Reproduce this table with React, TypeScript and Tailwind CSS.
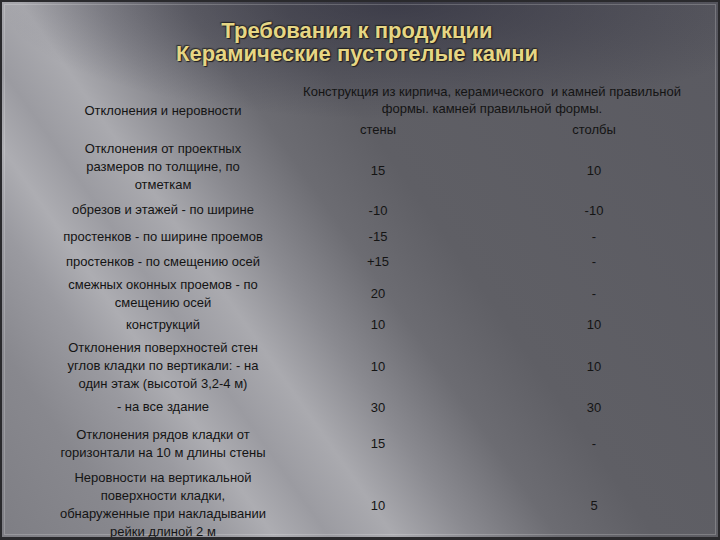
import React from 'react'

type Row = { label: string[]; walls: string; pillars: string; shift?: boolean }

const rows: Row[] = [
  { label: ['Отклонения от проектных', 'размеров по толщине, по', 'отметкам'], walls: '15', pillars: '10', shift: true },
  { label: ['обрезов и этажей - по ширине'], walls: '-10', pillars: '-10' },
  { label: ['простенков - по ширине проемов'], walls: '-15', pillars: '-' },
  { label: ['простенков - по смещению осей'], walls: '+15', pillars: '-' },
  { label: ['смежных оконных проемов - по', 'смещению осей'], walls: '20', pillars: '-' },
  { label: ['конструкций'], walls: '10', pillars: '10' },
  { label: ['Отклонения поверхностей стен', 'углов кладки по вертикали: - на', 'один этаж (высотой 3,2-4 м)'], walls: '10', pillars: '10' },
  { label: ['- на все здание'], walls: '30', pillars: '30' },
  { label: ['Отклонения рядов кладки от', 'горизонтали на 10 м длины стены'], walls: '15', pillars: '-' },
  { label: ['Неровности на вертикальной', 'поверхности кладки,', 'обнаруженные при накладывании', 'рейки длиной 2 м'], walls: '10', pillars: '5' },
]

function Cell({ children }: { children: React.ReactNode }) {
  return <div className="flex flex-col items-center justify-center text-center">{children}</div>
}

export default function App() {
  return (
    <div className="w-[720px] h-[540px] overflow-hidden border-2 border-b-[3px] border-[#2a2a2d] p-[2px] font-['Liberation_Sans',Arial,sans-serif] bg-[radial-gradient(ellipse_55%_22%_at_55%_0%,rgba(28,28,46,0.5)_0%,rgba(28,28,46,0)_100%),linear-gradient(55deg,#7e7e84_0%,#88888e_12%,#9a9aa0_20%,#adadb2_25%,#9b9ba1_30%,#aaaaaf_36%,#8a8a90_43%,#6c6c72_51%,#5f5f65_60%,#5a5a61_100%)]">
      <div className="h-full border border-white/20">
        {/* title */}
        <div className="pt-[14px] pr-[6px] text-center text-[22px] leading-[23px] font-bold text-[#e6d684] [text-shadow:1px_1px_1px_#1e1e1e,-1px_-1px_1px_rgba(30,30,30,0.7),1px_-1px_1px_rgba(30,30,30,0.5)]">
          <div>Требования к продукции</div>
          <div>Керамические пустотелые камни</div>
        </div>

        {/* table */}
        <div className="mt-[15px] ml-[45px] grid grid-cols-[226px_204px_228px] grid-rows-[40px_20px_54px_32px_21px_29px_35px_27px_56px_26px_47px_76px] text-[13px] leading-[18px] text-[#141414]">
          <div className="row-span-2 flex items-center justify-center text-center pt-[2px]">
            Отклонения и неровности
          </div>
          <div className="col-span-2 flex flex-col items-center justify-center text-center leading-[17px]">
            <div>Конструкция из кирпича, керамического&nbsp; и камней правильной</div>
            <div>формы. камней правильной формы.</div>
          </div>
          <Cell>стены</Cell>
          <Cell>столбы</Cell>

          {rows.map((r, i) => (
            <React.Fragment key={i}>
              <Cell>
                {r.label.map((l, j) => (
                  <div key={j} className="whitespace-nowrap">{l}</div>
                ))}
              </Cell>
              <Cell>
                <div className={r.shift ? 'pt-[8px]' : 'pt-[1px]'}>{r.walls}</div>
              </Cell>
              <Cell>
                <div className={r.shift ? 'pt-[8px]' : 'pt-[1px]'}>{r.pillars}</div>
              </Cell>
            </React.Fragment>
          ))}
        </div>
      </div>
    </div>
  )
}
